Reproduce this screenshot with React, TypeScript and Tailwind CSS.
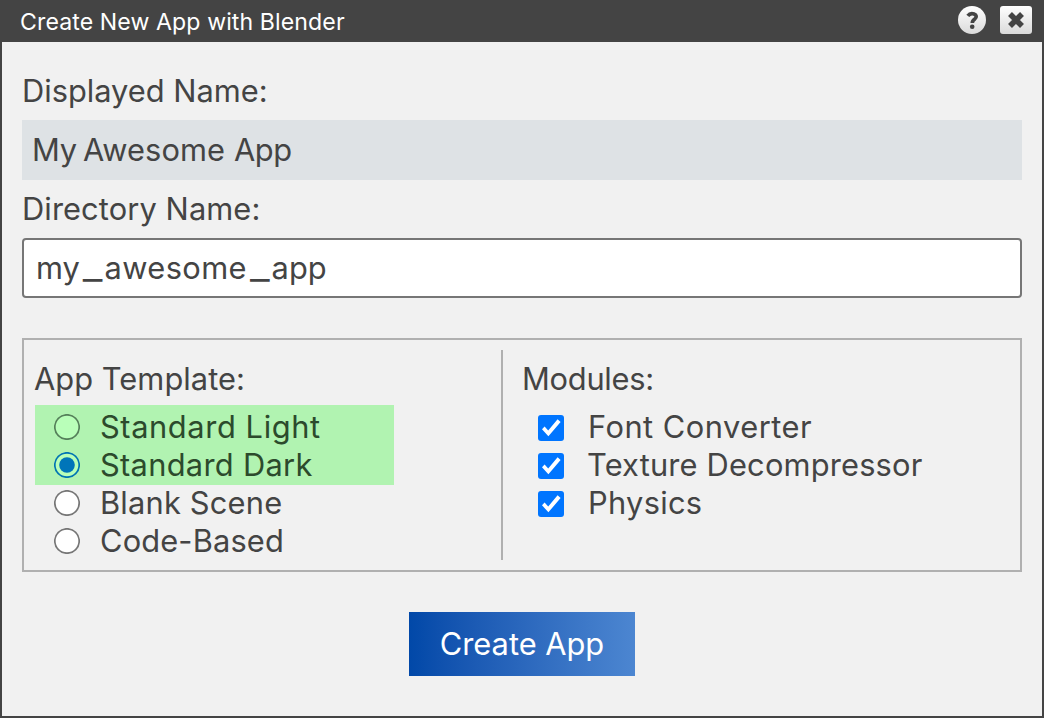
import React from "react";

function Radio({ label, value, checked, tinted, className }: { label: string; value: string; checked?: boolean; tinted?: boolean; className: string }) {
  return (
    <label className={"flex h-[38px] items-center pl-[19px] " + (tinted ? "text-[#2c4a2c]" : "text-[#444444]")}>
      <input type="radio" name="template" value={value} defaultChecked={checked} className="peer sr-only" />
      <svg viewBox="0 0 26 26" className="mr-5 size-[26px] shrink-0">
        <circle cx="13" cy="13" r="12.2" strokeWidth="1.7" fill={tinted ? "#b9ffb9" : "#ffffff"} stroke={checked ? "#0075b3" : tinted ? "#55805a" : "#767676"} />
        {checked && <circle cx="13" cy="13" r="7.8" fill="#0075b9" />}
      </svg>
      <span className={className}>{label}</span>
    </label>
  );
}

function Check({ label, className }: { label: string; className: string }) {
  return (
    <label className="flex h-[38px] items-center pl-4">
      <input type="checkbox" defaultChecked className="sr-only" />
      <svg viewBox="0 0 26 26" className="relative top-px mr-[23px] size-[26px] shrink-0">
        <rect width="26" height="26" rx="3" fill="#0075ff" />
        <path d="M4 14.2 6.6 11.6 10.2 15.6 19.6 4.3 22.6 6.9 10.4 21.3Z" fill="#ffffff" />
      </svg>
      <span className={className}>{label}</span>
    </label>
  );
}

function Underscore() {
  return <span className="mr-[2px] ml-[3px] align-[0px] text-[44px] leading-[10px] font-light">_</span>;
}

export default function App() {
  return (
    <div className="flex h-[718px] w-[1044px] flex-col border-2 border-t-0 border-[#444444] bg-[#f1f1f1] font-['Inter',sans-serif] text-[30.8px] leading-[38px] whitespace-nowrap text-[#444444]">
      <header className="flex h-[42px] shrink-0 items-center bg-[#444444] pr-[10px] pl-[18px] text-white">
        <h1 className="mt-0.5 flex-1 text-[23.1px] leading-10 tracking-[0.1px]">Create New App with Blender</h1>
        <button aria-label="Help" className="mr-[14px]">
          <svg viewBox="0 0 28 28" className="mt-[-2px] block size-7">
            <defs>
              <linearGradient id="face" x1="0" y1="0" x2="0" y2="1">
                <stop offset="0" stopColor="#ffffff" />
                <stop offset="1" stopColor="#dadada" />
              </linearGradient>
            </defs>
            <circle cx="14" cy="14" r="14" fill="url(#face)" />
            <path d="M9.8 9.8C11.4 7.7 14 7.2 16 7.9C18.8 8.9 18.8 11.6 16.8 13C15.2 14.1 14.3 14.8 14.3 17" fill="none" stroke="#444444" strokeWidth="3.7" />
            <circle cx="14.2" cy="20.7" r="2.3" fill="#444444" />
          </svg>
        </button>
        <button aria-label="Close">
          <svg viewBox="0 0 32 28" className="mt-[-2px] block h-7 w-8">
            <rect width="32" height="28" rx="3" fill="url(#face)" />
            <path d="M10 8.1 22 19.9M22 8.1 10 19.9" stroke="#444444" strokeWidth="5.6" />
          </svg>
        </button>
      </header>
      <main className="flex flex-col px-5 pt-[30px]">
        <p>Displayed Name:</p>
        <div className="mt-[10px] flex h-[60px] items-center bg-[#dee2e5] pl-[10px]">
          <p><span className="tracking-[-0.2px]">My</span><span className="tracking-[-2.5px]"> </span><span className="tracking-[0.1px]">Awesome </span><span className="tracking-[-0.4px]">App</span></p>
        </div>
        <p className="mt-[10px] tracking-[0.1px]">Directory Name:</p>
        <div className="mt-[10px] flex h-[60px] items-center rounded-[4px] border-2 border-[#767676] bg-white pl-3">
          <p className="h-[38px]">my<Underscore /><span className="tracking-[0.4px]">awesome</span><Underscore />app</p>
        </div>
        <section className="mt-10 flex h-[234px] border-2 border-[#b0b0b0] pt-[10px]">
          <div className="h-[210px] w-[479px] border-r-2 border-[#b0b0b0] pl-[11px]">
            <p className="-ml-px mt-[10px] tracking-[0.05px]">App Template:</p>
            <div className="-mb-px mt-[7px] h-20 w-[359px] bg-[#b1f3b1] pt-[3px]">
              <Radio label="Standard Light" value="light" tinted className="tracking-[0.6px]" />
              <Radio label="Standard Dark" value="dark" tinted checked className="tracking-[0.3px]" />
            </div>
            <Radio label="Blank Scene" value="blank" className="tracking-[0.2px]" />
            <Radio label="Code-Based" value="code" className="tracking-[0.15px]" />
          </div>
          <div className="pl-[19px]">
            <p className="mt-[10px] mb-[10px] tracking-[-0.25px]">Modules:</p>
            <Check label="Font Converter" className="ml-px tracking-[0.5px]" />
            <Check label="Texture Decompressor" className="tracking-[0.18px]" />
            <Check label="Physics" className="ml-px tracking-[0.3px]" />
          </div>
        </section>
        <button className="mt-10 h-16 w-[226px] self-center bg-linear-to-r from-[#0148a8] to-[#4c86d1] text-white">Create App</button>
      </main>
    </div>
  );
}
